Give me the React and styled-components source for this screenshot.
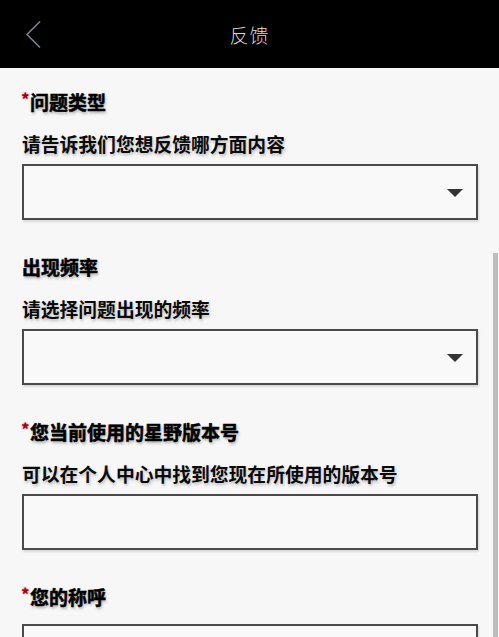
import React from 'react';
import styled, {createGlobalStyle} from 'styled-components';

const GlobalStyle = createGlobalStyle`
html, body {
  margin:0;
  padding:0;
  background:#f7f7f7;
  font-family:"Noto Sans CJK SC", "Noto Sans", sans-serif;
}
`

const sections = [
    {title:"问题类型", required:true, hint:"请告诉我们您想反馈哪方面内容", kind:"select"},
    {title:"出现频率", required:false, hint:"请选择问题出现的频率", kind:"select"},
    {title:"您当前使用的星野版本号", required:true, hint:"可以在个人中心中找到您现在所使用的版本号", kind:"input"},
    {title:"您的称呼", required:true, kind:"input"}
]

function BackIcon () {
    return (
        <svg width="18" height="30" viewBox="0 0 18 30">
            <polyline points="15,1.5 2,14.5 15,27.5" fill="none" stroke="#7c8098" strokeWidth="1.6"/>
        </svg>
    )
}

function Field ({section}) {
    return (
        <SECTION>
            <TITLE hasHint={!!section.hint}>
                {section.required && <STAR>*</STAR>}
                {section.title}
            </TITLE>
            {section.hint && <HINT>{section.hint}</HINT>}
            <BOX>
                {section.kind === "select" && <ARROW/>}
            </BOX>
        </SECTION>
    )
}

function App () {
    return (
        <div>
            <GlobalStyle/>
            <HEADER>
                <BACK><BackIcon/></BACK>
                <HEADER_TITLE>反馈</HEADER_TITLE>
                <div/>
            </HEADER>
            <MAIN>
                {sections.map((section, key) =>
                    <Field key={key} section={section}/>
                )}
            </MAIN>
            <SCROLLBAR/>
        </div>
    )
}

export default App;

const HEADER = styled.div `
height:68px;
background:#000;
display:grid;
grid-template-columns:1fr auto 1fr;
align-items:center;
padding:0 25px;
box-sizing:border-box;
`

const BACK = styled.div `
display:flex;
align-items:center;
height:30px;
padding-top:2px;
`

const HEADER_TITLE = styled.div `
color:#d8d8dc;
font-size:19px;
font-weight:300;
letter-spacing:1px;
`

const MAIN = styled.div `
padding:21px 21px 0 22px;
height:569px;
overflow:hidden;
box-sizing:border-box;
`

const SECTION = styled.div `
margin-bottom:34px;
`

const TITLE = styled.div `
font-size:19px;
line-height:26px;
font-weight:700;
color:#000;
-webkit-text-stroke:0.5px #000;
margin-bottom:${props => props.hasHint ? "16px" : "14px"};
text-shadow:1px 2px 3px rgba(0,0,0,0.32);
display:flex;
align-items:center;
`

const STAR = styled.span `
color:#a00010;
-webkit-text-stroke:0;
font-size:17px;
width:9px;
margin-top:-6px;
margin-left:-1px;
text-shadow:0 0 2px rgba(230,40,60,0.7);
`

const HINT = styled.div `
font-size:18.8px;
line-height:26px;
font-weight:700;
color:#0a0a0a;
margin-bottom:7px;
text-shadow:1px 2px 3px rgba(0,0,0,0.25);
`

const BOX = styled.div `
height:56px;
border:2px solid #4a4a4a;
box-sizing:border-box;
background:#f9f9f9;
display:flex;
align-items:center;
justify-content:flex-end;
padding:2px 13px 0 0;
box-shadow:1px 2px 2px rgba(0,0,0,0.12);
`

const ARROW = styled.div `
width:0;
height:0;
border-left:8px solid transparent;
border-right:8px solid transparent;
border-top:8px solid #333;
`

const SCROLLBAR = styled.div `
position:fixed;
right:1px;
top:253px;
width:5px;
height:384px;
background:#bdbdbd;
`
